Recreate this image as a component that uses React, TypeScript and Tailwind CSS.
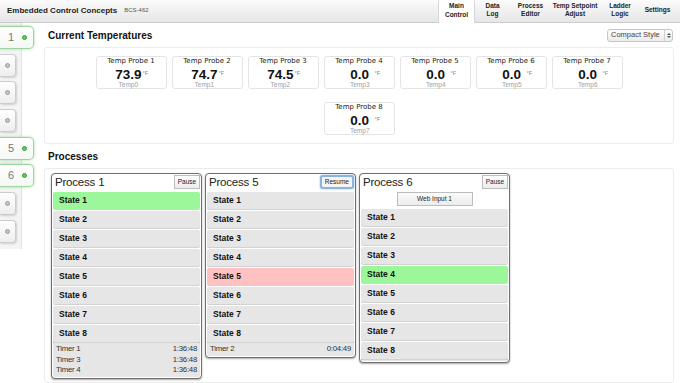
import React from 'react';

const TABS = [
  { lines: ['Main', 'Control'], w: 'w-[37px]', active: true },
  { lines: ['Data', 'Log'], w: 'w-[35px]' },
  { lines: ['Process', 'Editor'], w: 'w-[41px]' },
  { lines: ['Temp Setpoint', 'Adjust'], w: 'w-[48px]' },
  { lines: ['Ladder', 'Logic'], w: 'w-[42px]' },
  { lines: ['Settings'], w: 'w-[33px]' },
];

const SIDE_TABS = [
  { n: 1, on: true },
  { n: 2, on: false },
  { n: 3, on: false },
  { n: 4, on: false },
  { n: 5, on: true },
  { n: 6, on: true },
  { n: 7, on: false },
  { n: 8, on: false },
];

const PROBES = [
  { label: 'Temp Probe 1', value: '73.9', id: 'Temp0' },
  { label: 'Temp Probe 2', value: '74.7', id: 'Temp1' },
  { label: 'Temp Probe 3', value: '74.5', id: 'Temp2' },
  { label: 'Temp Probe 4', value: '0.0', id: 'Temp3' },
  { label: 'Temp Probe 5', value: '0.0', id: 'Temp4' },
  { label: 'Temp Probe 6', value: '0.0', id: 'Temp5' },
  { label: 'Temp Probe 7', value: '0.0', id: 'Temp6' },
  { label: 'Temp Probe 8', value: '0.0', id: 'Temp7' },
];

interface Proc {
  name: string;
  button: string;
  focused?: boolean;
  webInput?: string;
  active: number;
  activeColor: string;
  timers: { name: string; time: string }[];
}

const PROCESSES: Proc[] = [
  {
    name: 'Process 1',
    button: 'Pause',
    active: 1,
    activeColor: 'bg-[#9cf79a]',
    timers: [
      { name: 'Timer 1', time: '1:36:48' },
      { name: 'Timer 3', time: '1:36:48' },
      { name: 'Timer 4', time: '1:36:48' },
    ],
  },
  {
    name: 'Process 5',
    button: 'Resume',
    focused: true,
    active: 5,
    activeColor: 'bg-[#ffc1c1]',
    timers: [{ name: 'Timer 2', time: '0:04:49' }],
  },
  {
    name: 'Process 6',
    button: 'Pause',
    webInput: 'Web Input 1',
    active: 4,
    activeColor: 'bg-[#9cf79a]',
    timers: [],
  },
];

function Dot({ on }: { on: boolean }) {
  return (
    <span
      className={`block w-[5px] h-[5px] rounded-full border ${
        on ? 'bg-[#5dcb5b] border-[#3e9c3c]' : 'bg-[#c4c4c4] border-[#9c9c9c]'
      }`}
    />
  );
}

function ProcessCard({ p }: { p: Proc }) {
  return (
    <div className="w-[151px] shrink-0 border border-[#6f6f6f] rounded-[4px] bg-white p-[1px] shadow-[0_1px_2px_rgba(0,0,0,0.35)]">
      {/* header */}
      <div className="h-[17px] flex items-start justify-between">
        <span className="pl-[2px] text-[11.5px] leading-[15px] text-[#222] tracking-[-0.2px]">{p.name}</span>
        {p.focused ? (
          <button className="h-[14px] px-[3px] border-2 border-[#8cb2e2] rounded-[3px] bg-[#f4f4f4] text-[6.5px] leading-none text-[#222] shadow-[0_0_2px_rgba(80,130,210,0.6)]">
            {p.button}
          </button>
        ) : (
          <button className="w-[26px] h-[14px] border border-[#bdbdbd] bg-gradient-to-b from-white to-[#ececec] text-[6.5px] leading-none text-[#222]">
            {p.button}
          </button>
        )}
      </div>

      {p.webInput && (
        <div className="flex justify-center mb-[3px]">
          <button className="w-[76px] h-[14px] border border-[#bdbdbd] bg-gradient-to-b from-[#fafafa] to-[#ececec] text-[6.5px] leading-none text-[#222]">
            {p.webInput}
          </button>
        </div>
      )}

      {/* states */}
      <div className="flex flex-col gap-[2px]">
        {Array.from({ length: 8 }, (_, i) => i + 1).map((s) => (
          <div
            key={s}
            className={`h-[17px] rounded-[2px] flex items-center pl-[6px] text-[8.5px] font-bold text-[#111] shadow-[0_1px_0_#d2d2d2] ${
              s === p.active ? p.activeColor : 'bg-[#e6e6e6]'
            }`}
          >
            State {s}
          </div>
        ))}
      </div>

      {/* timers */}
      {p.timers.length > 0 ? (
        <div className="border-t border-[#b9b9b9] bg-[#e6e6e6] pt-[1px] pb-[1px] rounded-b-[2px]">
          {p.timers.map((t) => (
            <div key={t.name} className="flex justify-between px-[3px] text-[7.8px] leading-[10.7px] text-[#333] tracking-[-0.25px]">
              <span>{t.name}</span>
              <span>{t.time}</span>
            </div>
          ))}
        </div>
      ) : (
        <div className="h-[2px] border-t border-[#b9b9b9] bg-[#e6e6e6]" />
      )}
    </div>
  );
}

export default function App() {
  return (
    <div className="w-[680px] h-[383px] overflow-hidden bg-white text-black font-['Liberation_Sans',Arial,sans-serif]">
      {/* top bar */}
      <header className="h-[23px] flex bg-gradient-to-b from-[#fbfbfb] to-[#e6e6e6] border-b border-[#cdcdcd]">
        <div className="flex items-center gap-[7px] pl-[7px] pb-[1px]">
          <span className="text-[8px] font-bold text-[#222]">Embedded Control Concepts</span>
          <span className="text-[6px] text-[#555]">BCS-462</span>
        </div>
        <nav className="ml-auto mr-[6px] flex">
          {TABS.map((t) => (
            <div
              key={t.lines.join(' ')}
              className={`${t.w} flex flex-col items-center justify-center pb-[2px] text-[6.5px] leading-[8.5px] font-bold text-[#222] text-center ${
                t.active ? 'bg-white border-x border-[#d6d6d6] mb-[-1px] rounded-t-[2px]' : ''
              }`}
            >
              {t.lines.map((l) => (
                <span key={l} className="whitespace-nowrap">{l}</span>
              ))}
            </div>
          ))}
        </nav>
      </header>

      <div className="flex">
        {/* left process tabs */}
        <aside className="w-[44px] shrink-0 self-start pt-[3px] pb-[6px] flex flex-col gap-[4.7px] bg-[linear-gradient(to_right,#f4f4f4_21px,#e2e2e2_21px,#e2e2e2_22px,transparent_22px)]">
          {SIDE_TABS.map((t) =>
            t.on ? (
              <div
                key={t.n}
                className="w-[34px] h-[23px] flex items-center pl-[8px] bg-gradient-to-b from-white to-[#f4f8f4] border border-l-0 border-[#9fd49e] rounded-r-[5px] shadow-[0_0_3px_rgba(90,190,90,0.55)]"
              >
                <span className="text-[11px] leading-none text-[#777] w-[6px]">{t.n}</span>
                <span className="ml-[8px]">
                  <Dot on />
                </span>
              </div>
            ) : (
              <div
                key={t.n}
                className="w-[16px] h-[23px] flex items-center pl-[5px] bg-gradient-to-b from-white to-[#eeeeee] border border-l-0 border-[#cdcdcd] rounded-r-[4px] shadow-[1px_1px_2px_rgba(0,0,0,0.15)]"
              >
                <Dot on={false} />
              </div>
            )
          )}
        </aside>

        <main className="flex-1 min-w-0 pr-[6px]">
          {/* Current Temperatures */}
          <div className="h-[24px] flex items-center justify-between pl-[4px]">
            <h2 className="text-[10px] font-bold text-[#111]">Current Temperatures</h2>
            <div className="w-[66px] h-[13px] flex items-center border border-[#c6c6c6] rounded-[3px] bg-gradient-to-b from-[#fdfdfd] to-[#ececec] text-[7.5px] text-[#444] mr-[1px]">
              <span className="pl-[3px] flex-1 whitespace-nowrap">Compact Style</span>
              <span className="h-full border-l border-[#d0d0d0] w-[8px] flex flex-col items-center justify-center gap-[1px]">
                <svg width="4" height="2" viewBox="0 0 4 2"><path d="M0 2 L2 0 L4 2 Z" fill="#555" /></svg>
                <svg width="4" height="2" viewBox="0 0 4 2"><path d="M0 0 L2 2 L4 0 Z" fill="#555" /></svg>
              </span>
            </div>
          </div>

          <section className="h-[97px] border border-[#ececec] rounded-[3px] pt-[8px]">
            <div className="w-[560px] mx-auto flex flex-wrap justify-center gap-x-[5px] gap-y-[13px]">
              {PROBES.map((p) => (
                <div key={p.id} className="w-[71px] h-[33px] border border-[#e4e4e4] rounded-[3px] bg-white">
                  <div className="text-center text-[7px] leading-[8px] text-[#222] font-['DejaVu_Sans',sans-serif]">{p.label}</div>
                  <div className="flex mt-[3px]">
                    <div className="w-[45px] shrink-0 flex justify-end">
                      <div className="flex flex-col items-center">
                        <span className="text-[13.5px] leading-[14px] font-bold text-[#111]">{p.value}</span>
                        <span className="text-[6.5px] leading-[6px] text-[#a0a0a0]">{p.id}</span>
                      </div>
                    </div>
                    <span className={`text-[5.5px] leading-[6px] mt-[2px] text-[#888] ${p.value === '0.0' ? 'ml-[5px]' : 'ml-[1px]'}`}>°F</span>
                  </div>
                </div>
              ))}
            </div>
          </section>

          {/* Processes */}
          <div className="h-[24px] flex items-center pl-[4px]">
            <h2 className="text-[10px] font-bold text-[#111]">Processes</h2>
          </div>

          <section className="h-[215px] border border-[#ececec] rounded-[3px] pt-[4px] pl-[6px] flex items-start gap-[3px]">
            {PROCESSES.map((p) => (
              <ProcessCard key={p.name} p={p} />
            ))}
          </section>
        </main>
      </div>
    </div>
  );
}
